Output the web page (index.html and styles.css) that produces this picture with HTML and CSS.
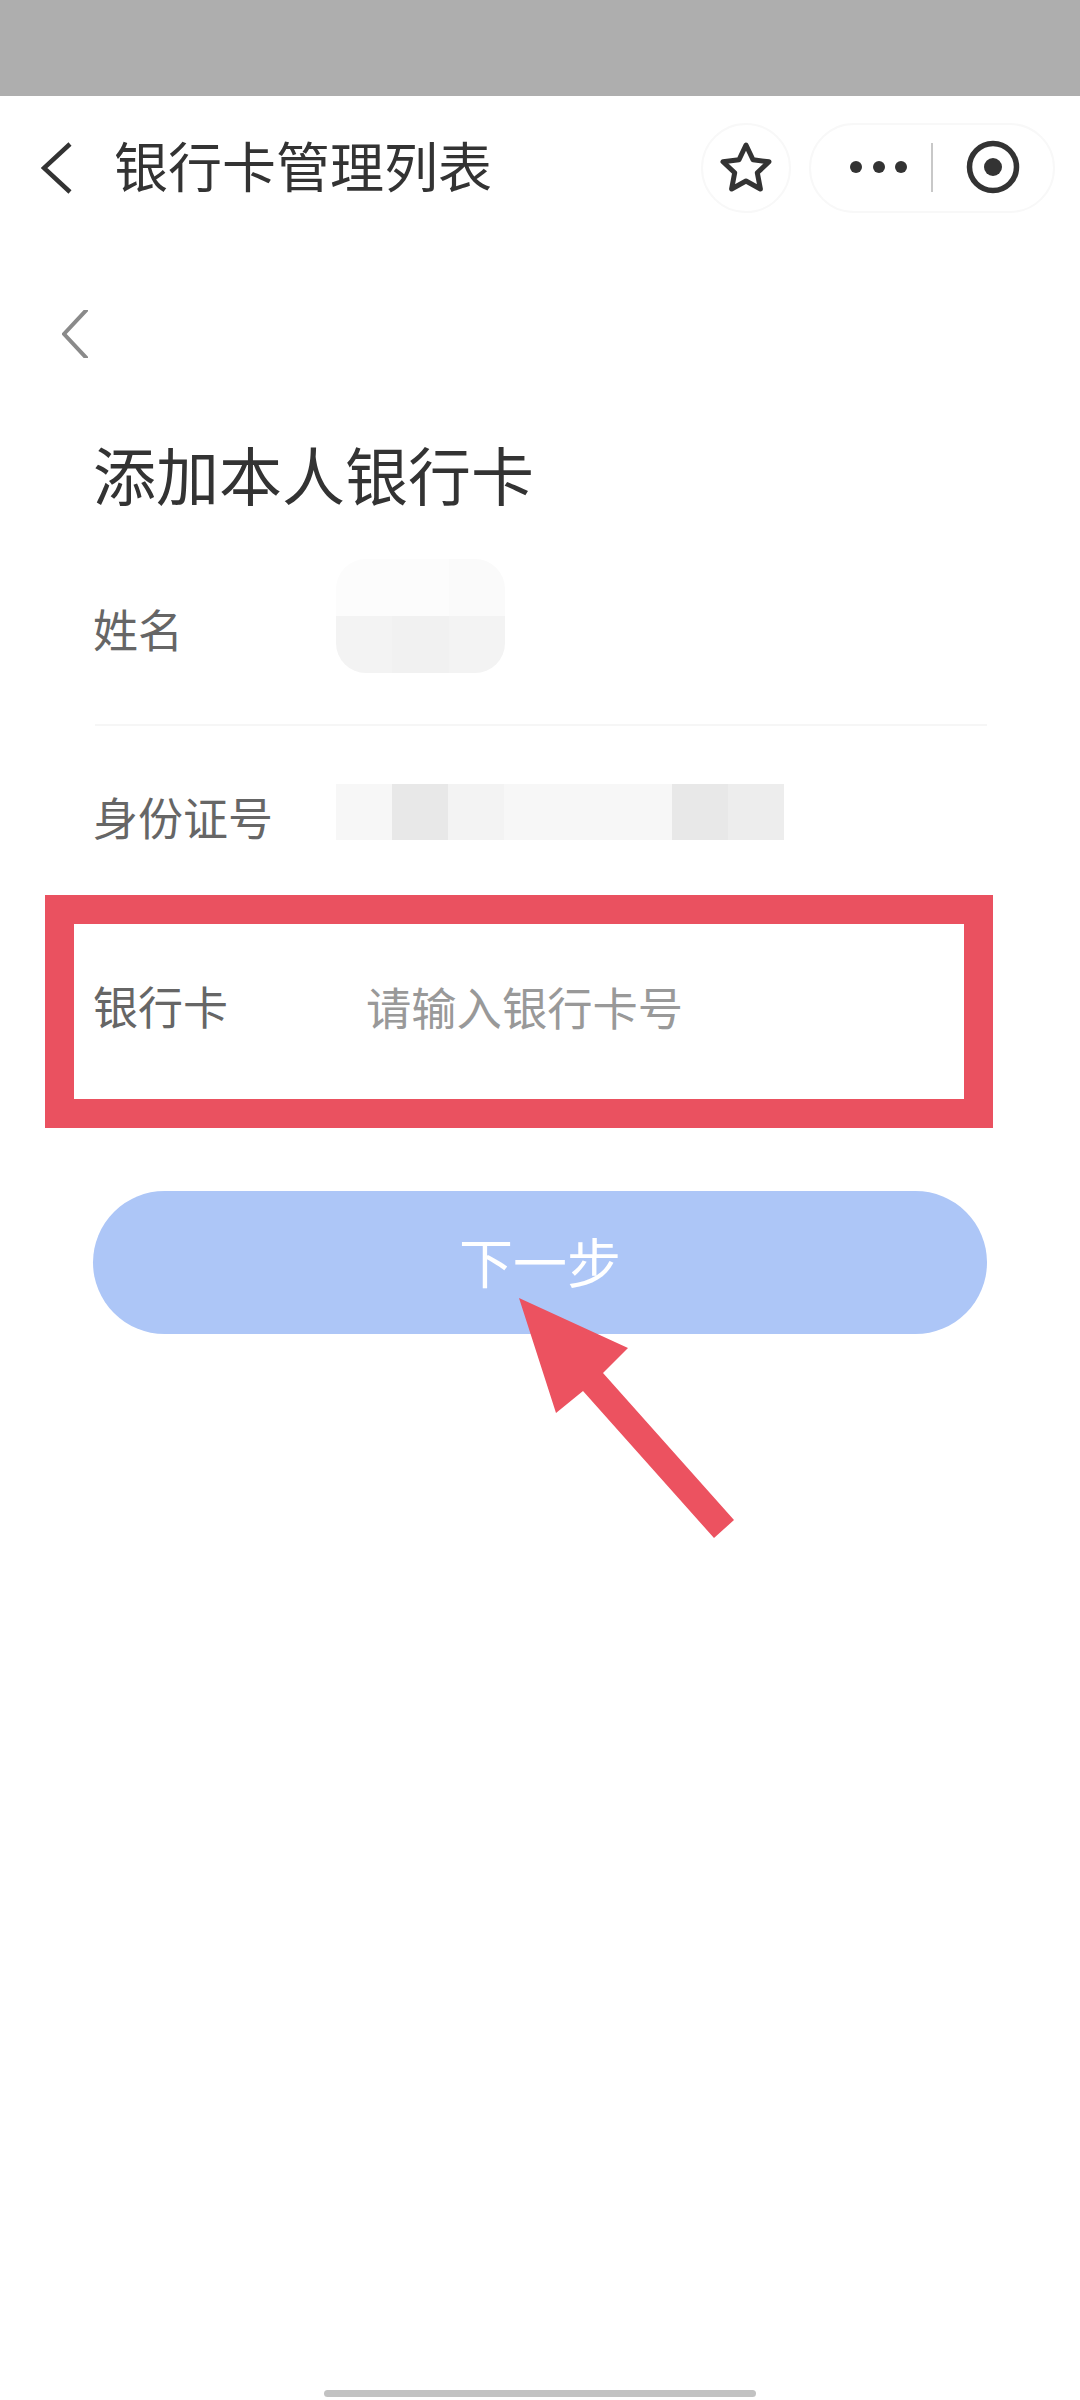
FILE: index.html
```html
<!DOCTYPE html>
<html lang="zh-CN">
<head>
<meta charset="utf-8">
<title>银行卡管理列表</title>
<link rel="stylesheet" href="styles.css">
</head>
<body>
<div class="page">
  <div class="status"></div>
  <header class="nav">
    <svg class="nav-back" viewBox="0 0 31 52"><path d="M29 2 3 26l26 24"/></svg>
    <div class="nav-title">银行卡管理列表</div>
    <div class="star-btn">
      <svg class="star" viewBox="0 0 52 52"><path d="M26 3 33 17.8 49 19.8 37.3 30.8 40.4 47 26 39 11.6 47 14.7 30.8 3 19.8 19 17.8Z"/></svg>
    </div>
    <div class="capsule">
      <div class="dots"><i></i><i></i><i></i></div>
      <div class="cap-sep"></div>
      <svg class="target" viewBox="0 0 56 56"><circle class="ring" cx="28" cy="28" r="23.5"/><circle class="core" cx="28" cy="28" r="9"/></svg>
    </div>
  </header>
  <main class="form">
    <svg class="form-back" viewBox="0 0 26 48"><path d="M30 -6 2 24l28 30"/></svg>
    <h1 class="heading">添加本人银行卡</h1>
    <div class="row row-name">
      <span class="label">姓名</span>
      <div class="mask mask-name">
        <div class="mask-line"><i class="s1 w2"></i><i class="s2"></i></div>
        <div class="mask-line"><i class="s3"></i><i class="s4"></i><i class="s3"></i></div>
      </div>
    </div>
    <div class="row row-id">
      <span class="label">身份证号</span>
      <div class="mask mask-id">
        <div class="mask-line"><i class="s5"></i><i class="s6"></i><i class="s7"></i><i class="s5 w3"></i><i class="s6"></i><i class="s8"></i></div>
      </div>
    </div>
    <div class="row row-card">
      <span class="label">银行卡</span>
      <span class="placeholder">请输入银行卡号</span>
    </div>
    <div class="next-btn"><span class="next-text">下一步</span></div>
  </main>
  <div class="home-bar"></div>
  <div class="red-box"></div>
  <svg class="arrow" viewBox="0 0 220 260"><path d="M3 2 112 52 87 77 218 224 198 242 67 95 40 117Z"/></svg>
</div>
</body>
</html>
```
FILE: styles.css
```css
* { box-sizing: border-box; }
html, body { margin: 0; padding: 0; background: #fff; }
body { font-family: "Noto Sans CJK SC", "Noto Sans", sans-serif; }
.page {
  position: relative;
  display: flex;
  flex-direction: column;
  width: 1080px;
  height: 2400px;
  overflow: hidden;
  background: #fff;
}
.status { height: 96px; background: #aeaeae; flex: none; }
.nav {
  display: flex;
  align-items: center;
  height: 144px;
  padding: 0 25px 0 41px;
  flex: none;
}
.nav-back { width: 31px; height: 52px; margin-right: 42px; flex: none; }
.nav-back path { fill: none; stroke: #333; stroke-width: 4.5; }
.nav-title { flex: 1; font-size: 54px; line-height: 64px; padding-bottom: 6px; color: #333; }
.star-btn {
  display: flex;
  align-items: center;
  justify-content: center;
  width: 90px;
  height: 90px;
  border: 2px solid #f8f8f8;
  border-radius: 50%;
  margin-right: 18px;
}
.star { width: 52px; height: 52px; }
.star path { fill: none; stroke: #333; stroke-width: 5; stroke-linejoin: round; }
.capsule {
  display: flex;
  align-items: center;
  width: 246px;
  height: 90px;
  padding: 0 0 2px 39px;
  border: 2px solid #f8f8f8;
  border-radius: 45px;
}
.dots { display: flex; gap: 10.5px; }
.dots i { display: block; width: 12px; height: 12px; border-radius: 50%; background: #333; }
.cap-sep { width: 1.5px; height: 49px; margin-left: 24px; background: #c8c8c8; }
.target { width: 56px; height: 56px; margin-left: 32px; }
.ring { fill: none; stroke: #333; stroke-width: 5.5; }
.core { fill: #333; }
.form { padding: 0 93px 0 95px; }
.form-back { display: block; width: 26px; height: 48px; margin: 70px 0 0 -33px; }
.form-back path { fill: none; stroke: #8a8a8a; stroke-width: 4; }
.heading {
  margin: 80px 0 26px -2px;
  font-size: 63px;
  line-height: 70px;
  font-weight: 400;
  color: #333;
}
.row { display: flex; height: 190px; align-items: center; font-size: 45px; line-height: 60px; }
.label { width: 241px; flex: none; margin-right: 2px; margin-left: -2px; color: #666; }
.row-name { height: 192px; border-bottom: 2px solid #f6f6f6; }
.row-id { height: 186px; }
.row-id .label { padding-bottom: 4px; }
.row-card .label, .row-card .placeholder { padding-bottom: 2px; }
.mask { align-self: flex-start; display: flex; flex-direction: column; overflow: hidden; }
.mask-name { width: 169px; height: 114px; margin-top: 25px; border-radius: 30px; }
.mask-id { width: 448px; height: 56px; margin-top: 58px; }
.mask-line { display: flex; flex: 1; }
.mask-line i { display: block; flex: 1; }
.mask-line .w2 { flex: 2; }
.mask-line .w3 { flex: 3; }
.s1 { background: #fcfcfc; }
.s2 { background: #fafafa; }
.s3 { background: #f3f3f3; }
.s4 { background: #f1f1f1; }
.s5 { background: #f7f7f7; }
.s6 { background: #e8e8e8; }
.s7 { background: #f3f3f3; }
.s8 { background: #ededed; }
.placeholder { margin-left: 30px; color: #999; font-size: 45.3px; }
.next-btn {
  display: flex;
  align-items: center;
  justify-content: center;
  height: 143px;
  margin: 89px 0 0 -2px;
  border-radius: 72px;
  background: #adc6f7;
  color: #fff;
  font-size: 54px;
}
.next-text { padding-bottom: 4px; }
.home-bar {
  align-self: center;
  width: 432px;
  height: 7px;
  margin-top: auto;
  margin-bottom: 3px;
  border-radius: 4px;
  background: #c2c2c2;
}
.red-box {
  position: absolute;
  left: 45px;
  top: 895px;
  width: 948px;
  height: 233px;
  border: 29px solid #ea5160;
}
.arrow {
  position: absolute;
  left: 516px;
  top: 1296px;
  width: 220px;
  height: 260px;
  overflow: visible;
}
.arrow path { fill: #ec5260; }
```
